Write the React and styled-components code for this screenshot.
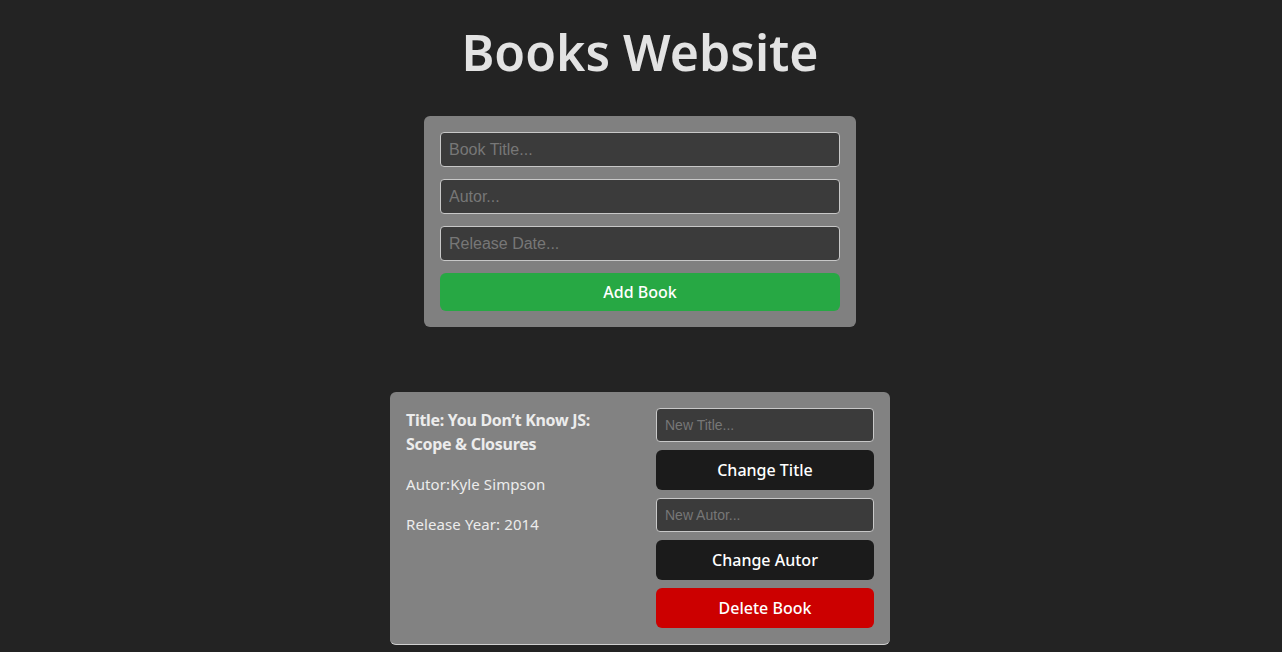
import React from "react";
import styled, { createGlobalStyle } from "styled-components";

const Global = createGlobalStyle`
  html, body { margin: 0; padding: 0; background: #232323; }
  body { font-family: "Noto Sans", "Open Sans", sans-serif; color: #e6e6e6; }
  * { box-sizing: border-box; }
`;

const Page = styled.div`
  display: flex;
  flex-direction: column;
  align-items: center;
  padding: 21px 2px 0 0;
`;

const Heading = styled.h1`
  margin: 0 0 33px;
  font-size: 50px;
  line-height: 62px;
  font-weight: 600;
  color: #e3e3e3;
  letter-spacing: 0;
`;

const FormCard = styled.div`
  width: 432px;
  background: #808080;
  border-radius: 6px;
  padding: 16px;
  display: flex;
  flex-direction: column;
  gap: 12px;
`;

const Input = styled.input`
  width: 100%;
  height: ${(p) => (p.$small ? 34 : 35)}px;
  background: #3b3b3b;
  border: 1px solid #c8c8c8;
  border-radius: 4px;
  padding: 0 8px;
  color: #ddd;
  font-family: "Liberation Sans", Arial, sans-serif;
  font-size: ${(p) => (p.$small ? 14 : 16)}px;
  outline: none;
  &::placeholder { color: #777; }
`;

const Button = styled.button`
  width: 100%;
  height: ${(p) => (p.$tall ? 40 : 38)}px;
  border: none;
  border-radius: 6px;
  background: ${(p) => p.$bg};
  color: #fff;
  font-family: "Noto Sans", sans-serif;
  font-size: 16px;
  font-weight: 500;
  cursor: pointer;
`;

const BookCard = styled.div`
  margin-top: 65px;
  width: 500px;
  background: #828282;
  border-radius: 6px;
  border-bottom: 1px solid #d0d0d0;
  padding: 16px;
  display: flex;
  justify-content: space-between;
`;

const Info = styled.div`
  width: 215px;
`;

const Text = styled.p`
  margin: 0 0 16px;
  font-size: ${(p) => (p.$bold ? 16 : 15)}px;
  line-height: 24px;
  color: #ececec;
  font-weight: ${(p) => (p.$bold ? 700 : 400)};
  letter-spacing: ${(p) => (p.$bold ? "-0.3px" : "0.1px")};
`;

const Controls = styled.div`
  width: 218px;
  display: flex;
  flex-direction: column;
  gap: 8px;
`;

export default function App() {
  return (
    <>
      <Global />
      <Page>
        <Heading>Books Website</Heading>
        <FormCard>
          <Input placeholder="Book Title..." />
          <Input placeholder="Autor..." />
          <Input placeholder="Release Date..." />
          <Button $bg="#27a844">Add Book</Button>
        </FormCard>
        <BookCard>
          <Info>
            <Text $bold>Title: You Don’t Know JS: Scope &amp; Closures</Text>
            <Text>Autor:Kyle Simpson</Text>
            <Text>Release Year: 2014</Text>
          </Info>
          <Controls>
            <Input $small placeholder="New Title..." />
            <Button $tall $bg="#1b1b1b">Change Title</Button>
            <Input $small placeholder="New Autor..." />
            <Button $tall $bg="#1b1b1b">Change Autor</Button>
            <Button $tall $bg="#cc0000">Delete Book</Button>
          </Controls>
        </BookCard>
      </Page>
    </>
  );
}
